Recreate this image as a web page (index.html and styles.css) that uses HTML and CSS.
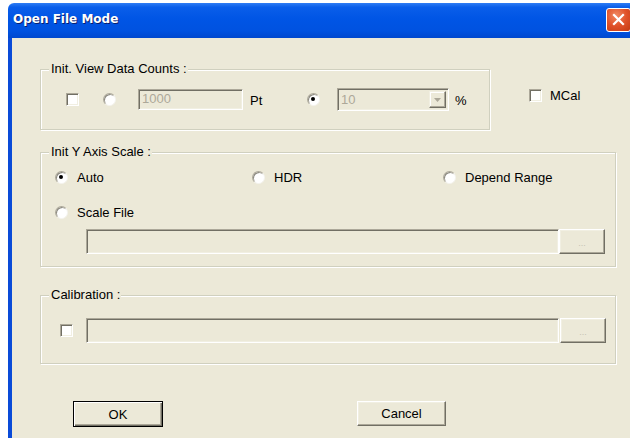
FILE: index.html
```html
<!DOCTYPE html>
<html>
<head>
<meta charset="utf-8">
<title>Open File Mode</title>
<link rel="stylesheet" href="styles.css">
</head>
<body>
<div class="window">
  <div class="titlebar">
    <span class="title">Open File Mode</span>
    <span class="close">
      <svg width="13" height="13" viewBox="0 0 13 13"><path d="M2 2 L11 11 M11 2 L2 11" stroke="#fff" stroke-width="2.2" stroke-linecap="square"/></svg>
    </span>
  </div>
  <div class="client">
    <div class="top-row">
      <div class="group group-counts">
        <span class="caption">Init. View Data Counts :</span>
        <div class="counts-row">
          <span class="check"></span>
          <span class="radio radio-gap"></span>
          <span class="field field-pt">1000</span>
          <span class="unit">Pt</span>
          <span class="radio checked"></span>
          <span class="combo">
            <span class="combo-text">10</span>
            <span class="combo-btn"><svg width="7" height="4" viewBox="0 0 7 4"><path d="M0 0 H7 L3.5 4 Z" fill="#aca899"/></svg></span>
          </span>
          <span class="pct">%</span>
        </div>
      </div>
      <label class="mcal"><span class="check"></span><span>MCal</span></label>
    </div>

    <div class="group group-scale">
      <span class="caption">Init Y Axis Scale :</span>
      <div class="opt-row">
        <label class="opt opt-auto"><span class="radio checked"></span><span>Auto</span></label>
        <label class="opt opt-hdr"><span class="radio"></span><span>HDR</span></label>
        <label class="opt"><span class="radio"></span><span>Depend Range</span></label>
      </div>
      <div class="opt-row opt-row2">
        <label class="opt"><span class="radio"></span><span>Scale File</span></label>
      </div>
      <div class="path-row path-row-scale">
        <span class="field field-path"></span>
        <span class="dots">...</span>
      </div>
    </div>

    <div class="group group-cal">
      <span class="caption">Calibration :</span>
      <div class="path-row path-row-cal">
        <span class="check"></span>
        <span class="field field-path field-cal"></span>
        <span class="dots">...</span>
      </div>
    </div>

    <div class="buttons">
      <span class="btn btn-default">OK</span>
      <span class="btn btn-cancel">Cancel</span>
    </div>
  </div>
</div>
</body>
</html>
```

FILE: styles.css
```css
html, body {
  margin: 0;
  padding: 0;
  overflow: hidden;
  background: #ffffff;
}

body {
  width: 630px;
  height: 438px;
  font-family: "Liberation Sans", Arial, sans-serif;
  font-size: 13px;
  color: #000;
}

.window {
  margin: 3px 0 0 8px;
  width: 640px;
}

/* Luna blue caption bar */
.titlebar {
  height: 35px;
  display: flex;
  align-items: center;
  padding-left: 5px;
  background: linear-gradient(#2f7df4 0%, #0a5eea 12%, #0055e5 45%, #0052e0 80%, #0048cf 100%);
  border-top-left-radius: 6px;
}

.title {
  font-family: "DejaVu Sans", Verdana, sans-serif;
  font-weight: bold;
  font-size: 12px;
  color: #fff;
  text-shadow: 1px 1px 0 #0a1e6e;
  margin-top: -3px;
}

.close {
  margin-left: 488px;
  width: 23px;
  height: 22px;
  margin-top: -2px;
  border: 1px solid #fff;
  border-radius: 3px;
  background: radial-gradient(circle at 40% 30%, #f08a62 0%, #e0522a 50%, #c43a12 100%);
  display: flex;
  align-items: center;
  justify-content: center;
  flex: none;
}

.close svg { display: block; }

.client {
  height: 400px;
  background: #ece9d8;
  border-left: 4px solid #0a4bd8;
  padding-left: 28px;
  box-sizing: border-box;
  padding-top: 31px;
}

/* etched group box */
.group {
  position: relative;
  border: 1px solid #d0d0bf;
  box-shadow: inset 1px 1px 0 #fff, 1px 1px 0 #fff;
  box-sizing: border-box;
}

.caption {
  position: absolute;
  top: -9px;
  left: 8px;
  padding: 0 1px 0 2px;
  background: #ece9d8;
  line-height: 16px;
}

.top-row {
  display: flex;
  align-items: flex-start;
}

.group-counts {
  width: 450px;
  height: 61px;
}

.counts-row {
  display: flex;
  align-items: center;
  padding: 18px 0 0 25px;
}

/* sunken check box */
.check {
  display: inline-block;
  width: 13px;
  height: 13px;
  box-sizing: border-box;
  background: #fff;
  border: 1px solid;
  border-color: #aca899 #fff #fff #aca899;
  box-shadow: inset 1px 1px 0 #716f64, inset -1px -1px 0 #f1efe2;
  flex: none;
}

/* sunken radio */
.radio {
  position: relative;
  display: inline-block;
  width: 13px;
  height: 13px;
  box-sizing: border-box;
  border-radius: 50%;
  background: #fff;
  border: 1px solid;
  border-color: #aca899 #f4f3ee #f4f3ee #aca899;
  box-shadow: inset 1px 1px 0 #8c8a80;
  flex: none;
}

.radio.checked::after {
  content: "";
  position: absolute;
  left: 3px;
  top: 3px;
  width: 4px;
  height: 4px;
  border-radius: 50%;
  background: #000;
}

.radio-gap { margin-left: 24px; }

.field {
  display: inline-block;
  box-sizing: border-box;
  border: 1px solid;
  border-color: #aca899 #fff #fff #aca899;
  box-shadow: inset 1px 1px 0 #716f64, inset -1px -1px 0 #f1efe2;
  background: #ece9d8;
  color: #aca899;
  flex: none;
}

.field-pt {
  margin-left: 22px;
  width: 105px;
  height: 21px;
  padding: 1px 0 0 3px;
  line-height: 16px;
}

.unit {
  width: 64px;
  padding-left: 7px;
  box-sizing: border-box;
  margin-top: 2px;
  flex: none;
}

.combo {
  display: flex;
  align-items: center;
  margin-left: 17px;
  width: 112px;
  height: 23px;
  box-sizing: border-box;
  border: 1px solid;
  border-color: #aca899 #fff #fff #aca899;
  box-shadow: inset 1px 1px 0 #716f64, inset -1px -1px 0 #f1efe2;
  padding: 2px 2px 2px 3px;
  flex: none;
}

.combo-text {
  flex: 1;
  color: #aca899;
}

.combo-btn {
  width: 17px;
  height: 17px;
  box-sizing: border-box;
  border: 1px solid;
  border-color: #f1efe2 #716f64 #716f64 #f1efe2;
  box-shadow: inset -1px -1px 0 #aca899, inset 1px 1px 0 #fff;
  display: flex;
  align-items: center;
  justify-content: center;
}

.combo-btn svg { display: block; }

.pct {
  margin-left: 6px;
  margin-top: 2px;
}

.mcal {
  display: flex;
  align-items: center;
  margin: 19px 0 0 39px;
  gap: 8px;
}

.group-scale {
  margin-top: 22px;
  width: 576px;
  height: 115px;
  padding: 16px 0 0 14px;
}

.opt-row {
  display: flex;
  align-items: center;
  height: 16px;
}

.opt {
  display: flex;
  align-items: center;
  gap: 9px;
}

.opt-auto { width: 197px; }
.opt-hdr { width: 191px; }

.opt-row2 { margin-top: 19px; }

.path-row {
  display: flex;
  align-items: center;
}

.path-row-scale {
  margin: 9px 0 0 31px;
}

.field-path {
  width: 473px;
  height: 25px;
}

.dots {
  width: 46px;
  height: 25px;
  box-sizing: border-box;
  border: 1px solid;
  border-color: #fff #716f64 #716f64 #fff;
  box-shadow: inset -1px -1px 0 #aca899, inset 1px 1px 0 #f1efe2;
  color: #c4c1b4;
  font-size: 9px;
  display: flex;
  align-items: center;
  justify-content: center;
  padding-top: 2px;
}

.group-cal {
  margin-top: 28px;
  width: 576px;
  height: 69px;
  padding: 22px 0 0 19px;
}

.field-cal { margin-left: 13px; }
.path-row-cal .dots { margin-left: 1px; }

.buttons {
  display: flex;
  align-items: flex-start;
  margin: 37px 0 0 33px;
}

.btn {
  display: flex;
  align-items: center;
  justify-content: center;
  width: 89px;
  height: 25px;
  box-sizing: border-box;
  border: 1px solid;
  border-color: #fff #716f64 #716f64 #fff;
  box-shadow: inset -1px -1px 0 #aca899, inset 1px 1px 0 #f1efe2;
  background: #ece9d8;
}

.btn-default {
  width: 90px;
  height: 26px;
  border: 1px solid #000;
  box-shadow: inset 1px 1px 0 #fff, inset -1px -1px 0 #716f64, inset -2px -2px 0 #aca899;
}

.btn-cancel { margin-left: 194px; }
```
